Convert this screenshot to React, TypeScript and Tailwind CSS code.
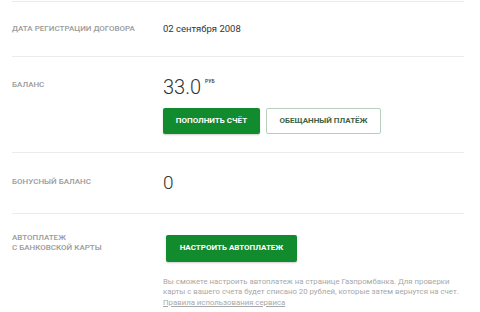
import React from 'react';

const Row = ({ label, children, className = '' }: { label: React.ReactNode; children: React.ReactNode; className?: string }) => (
  <div className={`flex border-t border-[#ececec] ${className}`}>
    <div className="w-[151px] shrink-0 text-[8px] font-medium uppercase leading-[10px] text-[#9a9a9a]">{label}</div>
    <div className="flex-1">{children}</div>
  </div>
);

const App = () => {
  return (
    <div className="h-[312px] w-[480px] overflow-hidden bg-white pl-[12px] pr-[16px] pt-[1px] font-['Roboto',sans-serif]">
      {/* Дата регистрации */}
      <Row label="Дата регистрации договора" className="h-[55px] items-center">
        <div className="text-[9.5px] text-[#333]">02 сентября 2008</div>
      </Row>

      {/* Баланс */}
      <Row label={<div className="pt-[23px]">Баланс</div>} className="h-[96px]">
        <div className="pt-[18px]">
          <div className="flex items-start text-[#333]">
            <span className="text-[20px] font-light leading-[24px]">33.0</span>
            <span className="ml-[4px] mt-[3px] text-[5px] font-medium">РУБ</span>
          </div>
          <div className="mt-[9px] flex gap-[6px]">
            <button className="h-[26px] w-[97px] rounded-[2px] bg-[#128a2e] text-[8px] font-bold uppercase text-white shadow-[0_1px_2px_rgba(0,0,0,0.2)]">
              Пополнить счёт
            </button>
            <button className="h-[26px] w-[115px] rounded-[2px] border border-[#b9cfbd] bg-white text-[8px] font-bold uppercase text-[#3d6446]">
              Обещанный платёж
            </button>
          </div>
        </div>
      </Row>

      {/* Бонусный баланс */}
      <Row label={<div className="pt-[24px]">Бонусный баланс</div>} className="h-[61px]">
        <div className="pt-[19px] text-[19px] font-light leading-[22px] text-[#333]">0</div>
      </Row>

      {/* Автоплатеж */}
      <Row
        label={
          <div className="pt-[19px]">
            Автоплатеж
            <br />
            с банковской карты
          </div>
        }
        className="h-[110px]"
      >
        <div className="pt-[19px]">
          <button className="ml-[3px] h-[27px] w-[131px] rounded-[2px] bg-[#128a2e] text-[8px] font-bold uppercase text-white shadow-[0_1px_2px_rgba(0,0,0,0.2)]">
            Настроить автоплатеж
          </button>
          <p className="mt-[15px] text-[7.8px] leading-[10.5px] text-[#a8a8a8]">
            Вы сможете настроить автоплатеж на странице Газпромбанка. Для проверки
            <br />
            карты с вашего счета будет списано 20 рублей, которые затем вернутся на счет.
            <br />
            <a className="underline">Правила использования сервиса</a>
          </p>
        </div>
      </Row>
    </div>
  );
};

export default App;
